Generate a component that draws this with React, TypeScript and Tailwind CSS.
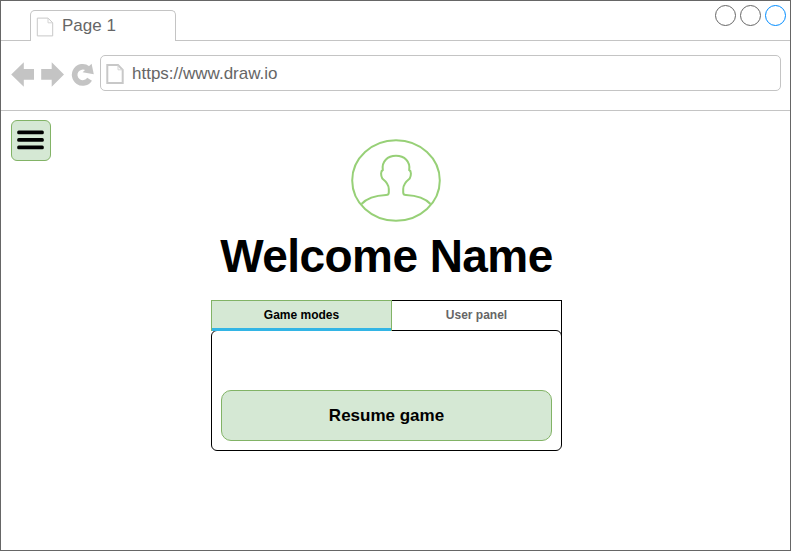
import React from "react";

function PageIcon({ className, strokeWidth }: { className: string; strokeWidth: number }) {
  return (
    <svg viewBox="0 0 18 20" className={className} fill="none" stroke="#c8c8c8" strokeWidth={strokeWidth}>
      <path d="M1.3 1.1H12L16.7 5.8V18.9H1.3Z" />
      <path d="M12 1.3V5.8H16.7" strokeWidth={1} stroke="#d4d4d4" />
    </svg>
  );
}

function TabStrip() {
  return (
    <div className="flex h-10 items-end">
      <div className="h-full w-[29px] border-b border-[#c4c4c4]" />
      <div className="flex h-[31px] w-[146px] shrink-0 items-center rounded-t-[5px] border border-b-0 border-[#c4c4c4] pl-[5px]">
        <PageIcon className="mt-px h-5 w-[18px]" strokeWidth={1} />
        <span className="ml-[8px] text-[17px] leading-5 text-[#666666]">Page 1</span>
      </div>
      <div className="flex h-full flex-1 justify-end gap-1 border-b border-[#c4c4c4] pt-1 pr-1">
        <div className="size-[21px] rounded-full border border-[#666666]" />
        <div className="size-[21px] rounded-full border border-[#666666]" />
        <div className="size-[21px] rounded-full border border-[#008cff]" />
      </div>
    </div>
  );
}

function Toolbar() {
  return (
    <div className="flex h-[70px] border-b border-[#c4c4c4] pt-[14px] pr-[9px]">
      <svg viewBox="1 55 99 36" className="h-9 w-[99px] shrink-0" fill="#c4c4c4">
        <path d="M11.2 74.5L23.8 62.2V69H34V79.7H23.8V86.8Z" />
        <path d="M64 74.5L51.7 62.2V69H41.2V79.7H51.7V86.8Z" />
        <path d="M89.6 79.2A8.1 8.1 0 1 1 87.6 68.4" fill="none" stroke="#c4c4c4" strokeWidth="5.6" />
        <path d="M91.6 63.8L93.8 74.2L82.6 72.2Z" />
      </svg>
      <div className="flex h-9 flex-1 items-center rounded-[5px] border border-[#c4c4c4] pl-[5px]">
        <PageIcon className="mt-px h-5 w-[18px]" strokeWidth={2} />
        <span className="mt-[2px] ml-[8px] text-[17px] leading-5 text-[#666666]">https://www.draw.io</span>
      </div>
    </div>
  );
}

function Avatar() {
  return (
    <svg viewBox="350 138 92 85" className="h-[85px] w-[92px]" fill="none" stroke="#97d077" strokeWidth="2">
      <ellipse cx="396" cy="180.5" rx="43.8" ry="40.3" />
      <path d="M361.5 204C367 198 376 195.5 386 195Q388.8 195 388.8 192.5V189C388.8 185 386 181.5 382.3 178.5C380.7 175.5 380.5 171 382.8 170C381.5 161.5 387.5 155.8 396 155.8S410.5 161.5 409.2 170C411.5 171 411.3 175.5 409.7 178.5C406 181.5 403.2 185 403.2 189V192.5Q403.2 195 406 195C416 195.5 425 198 430.5 204" />
    </svg>
  );
}

export default function App() {
  return (
    <div
      className="flex h-[551px] w-[791px] flex-col overflow-hidden border border-[#666666] bg-white"
      style={{ fontFamily: '"Liberation Sans", Arial, sans-serif' }}
    >
      <TabStrip />
      <Toolbar />
      <main className="flex flex-1 items-start pt-[9px] pl-[10px]">
        <button aria-label="Menu" className="flex h-[41px] w-10 flex-col items-start rounded-[6px] border border-[#82b366] bg-[#d5e8d4] pt-[9px] pl-[5px]">
          <svg viewBox="0 0 27 20" className="h-5 w-[27px]">
            <rect x="0.2" y="0.4" width="26.6" height="3.8" rx="1.5" />
            <rect x="0.2" y="7.9" width="26.6" height="3.8" rx="1.5" />
            <rect x="0.2" y="15.4" width="26.6" height="3.8" rx="1.5" />
          </svg>
        </button>
        <section className="ml-[160px] flex w-[351px] flex-col items-center pt-[18px]">
          <div className="pl-[19px]">
            <Avatar />
          </div>
          <h1 className="mt-[5px] h-[56px] text-[46px] leading-[56px] font-bold tracking-[-0.56px] whitespace-nowrap text-black">
            Welcome Name
          </h1>
          <div className="mt-[16px] flex h-[30px] w-full text-[12px] font-bold">
            <div className="z-10 flex h-[31px] w-[181px] flex-col border border-b-0 border-[#82b366] bg-[#d5e8d4]">
              <div className="h-[27px] text-center leading-[28px] text-black">Game modes</div>
              <div className="h-[3px] shrink-0 bg-[#33b5e5]" />
            </div>
            <div className="h-10 flex-1 border-t border-r border-black text-center leading-[29px] text-[#666666]">
              User panel
            </div>
          </div>
          <div className="h-[121px] w-full rounded-[6px] border border-black px-[9px] pt-[59px]">
            <button className="h-[51px] w-[331px] rounded-[10px] border border-[#82b366] bg-[#d5e8d4] text-[17px] font-bold text-black">
              Resume game
            </button>
          </div>
        </section>
      </main>
    </div>
  );
}
